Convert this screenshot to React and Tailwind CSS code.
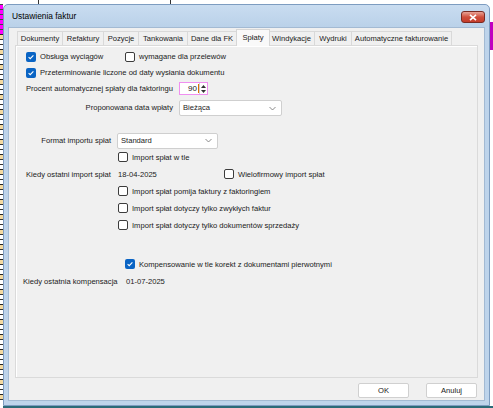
import React from 'react';

const font = { fontFamily: '"Liberation Sans", Arial, sans-serif' };

function Check({ checked }) {
    return checked ? (
        <span className="inline-flex items-center justify-center w-[10px] h-[10px] rounded-[2px] bg-[#0a64c4] shrink-0">
            <svg width="8" height="8" viewBox="0 0 8 8">
                <path d="M1.6 4.2 L3.2 5.7 L6.4 2.3" fill="none" stroke="#fff" strokeWidth="1.1" />
            </svg>
        </span>
    ) : (
        <span className="inline-block w-[10px] h-[10px] rounded-[2px] border border-[#3c3c3c] bg-white shrink-0" />
    );
}

function CheckRow({ checked, label, className = '' }) {
    return (
        <div className={`flex items-center gap-[4px] ${className}`}>
            <Check checked={checked} />
            <span>{label}</span>
        </div>
    );
}

function Select({ value, width }) {
    return (
        <div className={`flex items-center justify-between h-[16px] ${width} bg-white border border-[#cfcfcf] rounded-[2px] pl-[3px] pr-[5px]`}>
            <span>{value}</span>
            <svg width="7" height="5" viewBox="0 0 7 5">
                <path d="M0.5 1 L3.5 4 L6.5 1" fill="none" stroke="#707070" strokeWidth="0.8" />
            </svg>
        </div>
    );
}

const tabs = ['Dokumenty', 'Refaktury', 'Pozycje', 'Tankowania', 'Dane dla FK', 'Spłaty', 'Windykacje', 'Wydruki', 'Automatyczne fakturowanie'];
const tabWidths = ['w-[46px]', 'w-[41px]', 'w-[35px]', 'w-[49px]', 'w-[49px]', 'w-[34px]', 'w-[46px]', 'w-[37px]', 'w-[100px]'];

// ticks of the spreadsheet showing behind the dialog on the left
const ticks = Array.from({ length: 80 }, (_, i) => i);

export default function App() {
    return (
        <div className="relative w-[493px] h-[408px] bg-white overflow-hidden text-[7.6px] text-[#1a1a1a]" style={font}>
            {/* background app behind the dialog */}
            <div className="absolute left-0 top-[4px] w-[3px] h-[404px] flex flex-col">
                {ticks.map((i) => (
                    <div key={i} className={`h-[5px] shrink-0 border-t ${i < 6 ? 'border-[#444] bg-[#ff00ff]' : i % 3 === 0 ? 'border-[#222] bg-[#f4d9a0]' : 'border-[#333] bg-white'}`} />
                ))}
            </div>
            <div className="absolute right-0 top-[22px] w-[3px] h-[28px] bg-[#c000c0]" />
            <div className="absolute left-[38px] top-0 w-px h-[4px] bg-[#333]" />
            <div className="absolute left-[170px] top-0 w-px h-[4px] bg-[#333]" />
            <div className="absolute left-[3px] bottom-0 w-[490px] h-[2px] bg-[#2b6a78]" />

            <div className="absolute left-[3px] top-[4px] w-[487px] h-[402px] rounded-t-[5px] border border-[#7d9cc0] bg-[#bed4eb] flex flex-col">
                {/* title bar */}
                <div className="flex items-center justify-between h-[22px] pl-[8px] pr-[4px] bg-gradient-to-b from-[#c9dcf0] to-[#bad1e9] rounded-t-[5px]">
                    <span className="text-[8.4px] text-black">Ustawienia faktur</span>
                    <div className="flex items-center justify-center w-[24px] h-[12px] mt-[2px] rounded-[3px] border border-[#7a2a22] bg-gradient-to-b from-[#e8a296] via-[#cf4e3c] to-[#c43c2a]">
                        <svg width="8" height="7" viewBox="0 0 8 7">
                            <path d="M1 0.8 L7 6.2 M7 0.8 L1 6.2" stroke="#fff" strokeWidth="1.6" />
                        </svg>
                    </div>
                </div>

                {/* client area */}
                <div className="flex-1 mx-[4px] mb-[4px] border border-[#a3bad3] bg-[#f0f0f0] flex flex-col px-[6px] pt-[1px]">
                    <div className="flex items-end h-[16px] pl-[2px]">
                        {tabs.map((t, i) =>
                            t === 'Spłaty' ? (
                                <div key={t} className={`${tabWidths[i]} h-[17px] -mx-[1px] flex items-center justify-center bg-[#f9f9f9] border border-b-0 border-[#d6d6d6] relative z-10 -mb-px`}>
                                    {t}
                                </div>
                            ) : (
                                <div key={t} className={`${tabWidths[i]} h-[14px] flex items-center justify-center bg-[#f0f0f0] border border-b-0 border-l-0 first:border-l border-[#d9d9d9]`}>
                                    {t}
                                </div>
                            )
                        )}
                    </div>

                    <div className="h-[333px] border border-[#dadada] bg-[#f0f0f0] shadow-[inset_1px_1px_0_#fff] relative">
                        <div className="flex flex-col pt-[3px]">
                            <div className="flex items-center h-[16px]">
                                <CheckRow checked label="Obsługa wyciągów" className="ml-[10px] w-[99px]" />
                                <CheckRow label="wymagane dla przelewów" />
                            </div>
                            <div className="flex items-center h-[16px]">
                                <CheckRow checked label="Przeterminowanie liczone od daty wysłania dokumentu" className="ml-[10px]" />
                            </div>
                            <div className="flex items-center h-[15px]">
                                <span className="ml-[10px] w-[153px]">Procent automatycznej spłaty dla faktoringu</span>
                                <div className="flex items-center h-[13px] w-[29px] border border-[#f08ff0] bg-white">
                                    <span className="flex-1 text-right pr-[1px] text-[8px]">90</span>
                                    <span className="w-px h-[9px] bg-[#e07000]" />
                                    <div className="flex flex-col items-center justify-center w-[8px] h-full border-l border-[#d0d0d0] gap-[2px]">
                                        <svg width="5" height="3" viewBox="0 0 5 3"><path d="M0 3 L2.5 0 L5 3 Z" fill="#333" /></svg>
                                        <svg width="5" height="3" viewBox="0 0 5 3"><path d="M0 0 L2.5 3 L5 0 Z" fill="#333" /></svg>
                                    </div>
                                </div>
                            </div>
                            <div className="flex items-center h-[18px] mt-[3px]">
                                <span className="w-[157px] text-right">Proponowana data wpłaty</span>
                                <div className="ml-[6px]">
                                    <Select value="Bieżąca" width="w-[103px]" />
                                </div>
                            </div>

                            <div className="flex items-center h-[17px] mt-[15px]">
                                <span className="w-[95px] text-right">Format importu spłat</span>
                                <div className="ml-[6px]">
                                    <Select value="Standard" width="w-[101px]" />
                                </div>
                            </div>
                            <div className="flex items-center h-[17px]">
                                <CheckRow label="Import spłat w tle" className="ml-[102px]" />
                            </div>
                            <div className="flex items-center h-[17px]">
                                <span className="ml-[10px] w-[92px]">Kiedy ostatni import spłat</span>
                                <span className="w-[106px]">18-04-2025</span>
                                <CheckRow label="Wielofirmowy import spłat" />
                            </div>
                            <div className="flex items-center h-[17px]">
                                <CheckRow label="Import spłat pomija faktury z faktoringiem" className="ml-[102px]" />
                            </div>
                            <div className="flex items-center h-[17px]">
                                <CheckRow label="Import spłat dotyczy tylko zwykłych faktur" className="ml-[102px]" />
                            </div>
                            <div className="flex items-center h-[17px]">
                                <CheckRow label="Import spłat dotyczy tylko dokumentów sprzedaży" className="ml-[102px]" />
                            </div>

                            <div className="flex items-center h-[17px] mt-[22px]">
                                <CheckRow checked label="Kompensowanie w tle korekt z dokumentami pierwotnymi" className="ml-[109px]" />
                            </div>
                            <div className="flex items-center h-[17px]">
                                <span className="ml-[7px] w-[103px]">Kiedy ostatnia kompensacja</span>
                                <span>01-07-2025</span>
                            </div>
                        </div>
                    </div>

                    <div className="flex justify-end gap-[17px] pt-[5px] pr-[1px]">
                        <button className="w-[51px] h-[15px] bg-white border border-[#d0d0d0] rounded-[2px] text-[7.6px]">OK</button>
                        <button className="w-[51px] h-[15px] bg-white border border-[#d0d0d0] rounded-[2px] text-[7.6px]">Anuluj</button>
                    </div>
                </div>
            </div>
        </div>
    );
}
